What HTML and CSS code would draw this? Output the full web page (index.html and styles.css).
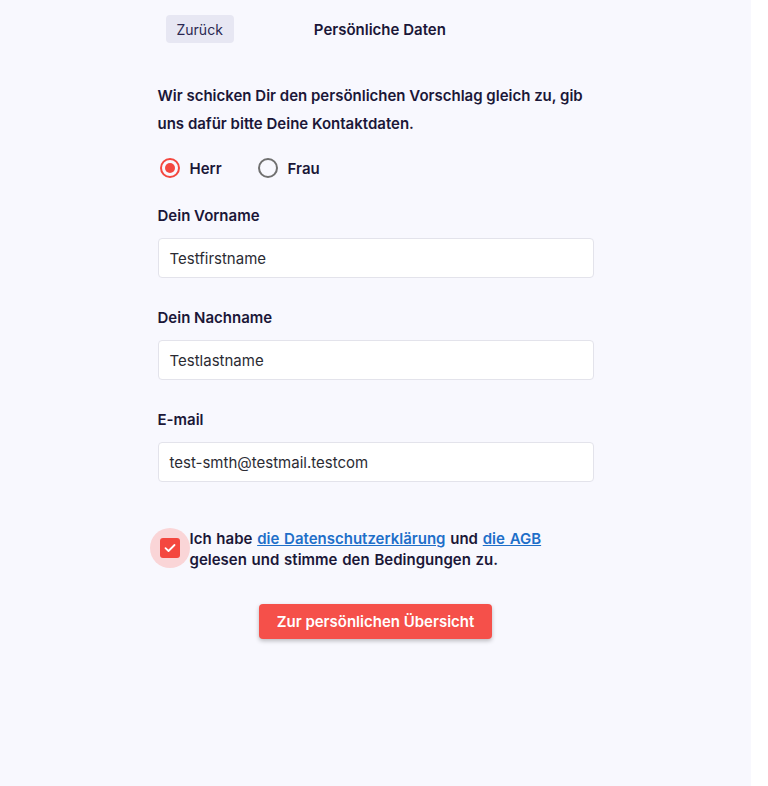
FILE: index.html
```html
<!DOCTYPE html>
<html lang="de">
<head>
<meta charset="utf-8">
<link rel="stylesheet" href="styles.css">
</head>
<body>
<div class="page">
  <header class="topbar">
    <button class="back">Zurück</button>
    <h1 class="title">Persönliche Daten</h1>
  </header>
  <main class="form">
    <p class="intro">Wir schicken Dir den persönlichen Vorschlag gleich zu, gib uns dafür bitte Deine Kontaktdaten.</p>
    <div class="radios">
      <label class="radio"><span class="dot on"></span>Herr</label>
      <label class="radio"><span class="dot"></span>Frau</label>
    </div>
    <div class="field">
      <div class="label">Dein Vorname</div>
      <div class="input">Testfirstname</div>
    </div>
    <div class="field">
      <div class="label">Dein Nachname</div>
      <div class="input">Testlastname</div>
    </div>
    <div class="field">
      <div class="label">E-mail</div>
      <div class="input">test-smth@testmail.testcom</div>
    </div>
    <div class="consent">
      <span class="check-halo"><span class="check"><svg width="12" height="10" viewBox="0 0 12 10"><path d="M1.5 5.2 L4.5 8 L10.5 2" fill="none" stroke="#fff" stroke-width="1.8" stroke-linecap="round" stroke-linejoin="round"/></svg></span></span>
      <p class="consent-text">Ich habe <a href="#">die Datenschutzerklärung</a> und <a href="#">die AGB</a> gelesen und stimme den Bedingungen zu.</p>
    </div>
    <div class="actions">
      <button class="submit">Zur persönlichen Übersicht</button>
    </div>
  </main>
</div>
</body>
</html>
```
FILE: styles.css
```css
* { box-sizing: border-box; }
html, body { margin: 0; padding: 0; background: #fff; }
body { font-family: Inter, "Noto Sans", sans-serif; color: #1b1738; }
.page {
  width: 751px;
  min-height: 786px;
  background: #f8f8fe;
}
.topbar {
  width: 436px;
  margin: 0 auto;
  padding-top: 15px;
  display: flex;
  align-items: center;
  gap: 80px;
}
.back {
  margin-left: 8px;
  height: 28px;
  padding: 0 11px;
  border: 0;
  border-radius: 4px;
  background: #e7e7f3;
  color: #2a2752;
  font-family: inherit;
  font-size: 14px;
}
.title {
  margin: 0;
  font-size: 15px;
  font-weight: 600;
  color: #1b1738;
}
.form {
  width: 436px;
  margin: 0 auto;
  padding-top: 39px;
}
.intro {
  margin: 0;
  font-size: 15px;
  font-weight: 600;
  line-height: 28px;
}
.radios {
  display: flex;
  gap: 34px;
  margin-top: 19px;
  height: 22px;
  align-items: center;
}
.radio {
  display: flex;
  align-items: center;
  gap: 10px;
  font-size: 15px;
  font-weight: 600;
}
.dot {
  width: 20px;
  height: 20px;
  margin-left: 2px;
  border-radius: 50%;
  border: 2px solid #707070;
  display: flex;
  align-items: center;
  justify-content: center;
}
.dot.on { border-color: #f4473f; }
.dot.on::after {
  content: "";
  width: 10px;
  height: 10px;
  border-radius: 50%;
  background: #f4473f;
}
.field { margin-top: 27px; }
.field + .field { margin-top: 30px; }
.label {
  font-size: 15px;
  font-weight: 600;
  line-height: 20px;
}
.input {
  margin-top: 12px;
  height: 40px;
  background: #fff;
  border: 1px solid #e3e3eb;
  border-radius: 4px;
  padding: 0 11px;
  display: flex;
  align-items: center;
  font-size: 15px;
  color: #2b2b33;
}
.consent {
  margin-top: 46px;
  display: flex;
  align-items: flex-start;
  margin-left: -8px;
}
.check-halo {
  flex: none;
  width: 40px;
  height: 40px;
  border-radius: 50%;
  background: #fad5d7;
  display: flex;
  align-items: center;
  justify-content: center;
}
.check {
  width: 20px;
  height: 20px;
  border-radius: 3px;
  background: #f4473f;
  display: flex;
  align-items: center;
  justify-content: center;
}
.consent-text {
  margin: 0;
  font-size: 15px;
  font-weight: 600;
  line-height: 21px;
  max-width: 380px;
  word-spacing: 1px;
}
.consent-text a { color: #1e6fc9; text-decoration: underline; }
.actions {
  margin-top: 34px;
  display: flex;
  justify-content: center;
}
.submit {
  height: 35px;
  padding: 0 18px;
  border: 0;
  border-radius: 4px;
  background: #f5504a;
  color: #fff;
  font-family: inherit;
  font-size: 15px;
  font-weight: 600;
  box-shadow: 0 2px 4px rgba(0,0,0,0.25);
}
```
